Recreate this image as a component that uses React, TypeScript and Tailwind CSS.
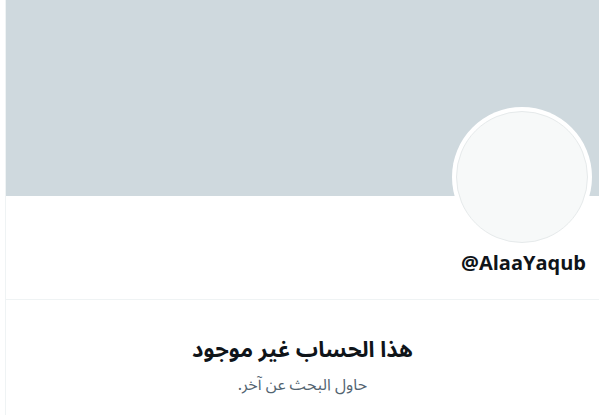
import React from "react";

export default function App() {
  return (
    <div className="w-[599px] h-[415px] bg-white overflow-hidden">
      <div className="ml-[5px] h-full border-l border-[#eff3f4] flex flex-col">
        <div className="h-[196px] bg-[#cfd9de] shrink-0" />
        <div className="flex flex-col items-end pr-[7px]">
          <div className="-mt-[89px] w-[140px] h-[140px] rounded-full bg-white p-[4px]">
            <div className="w-full h-full rounded-full bg-[#f7f9f9] border border-[#e6eaeb]" />
          </div>
        </div>
        <div
          className="flex justify-end pr-[13px] mt-[2px] h-[51px] border-b border-[#eff3f4]"
          style={{ fontFamily: '"Open Sans", "Noto Sans", sans-serif' }}
        >
          <span className="text-[20px] leading-[28px] font-bold text-[#0f1419]">@AlaaYaqub</span>
        </div>
        <div
          className="flex flex-col items-center pt-[30px]"
          dir="rtl"
          style={{ fontFamily: '"Noto Sans Arabic", "DejaVu Sans", sans-serif' }}
        >
          <div className="text-[22px] leading-[40px] font-bold text-[#0f1419]">هذا الحساب غير موجود</div>
          <div className="text-[16px] leading-[30px] text-[#536471]">حاول البحث عن آخر.</div>
        </div>
      </div>
    </div>
  );
}
